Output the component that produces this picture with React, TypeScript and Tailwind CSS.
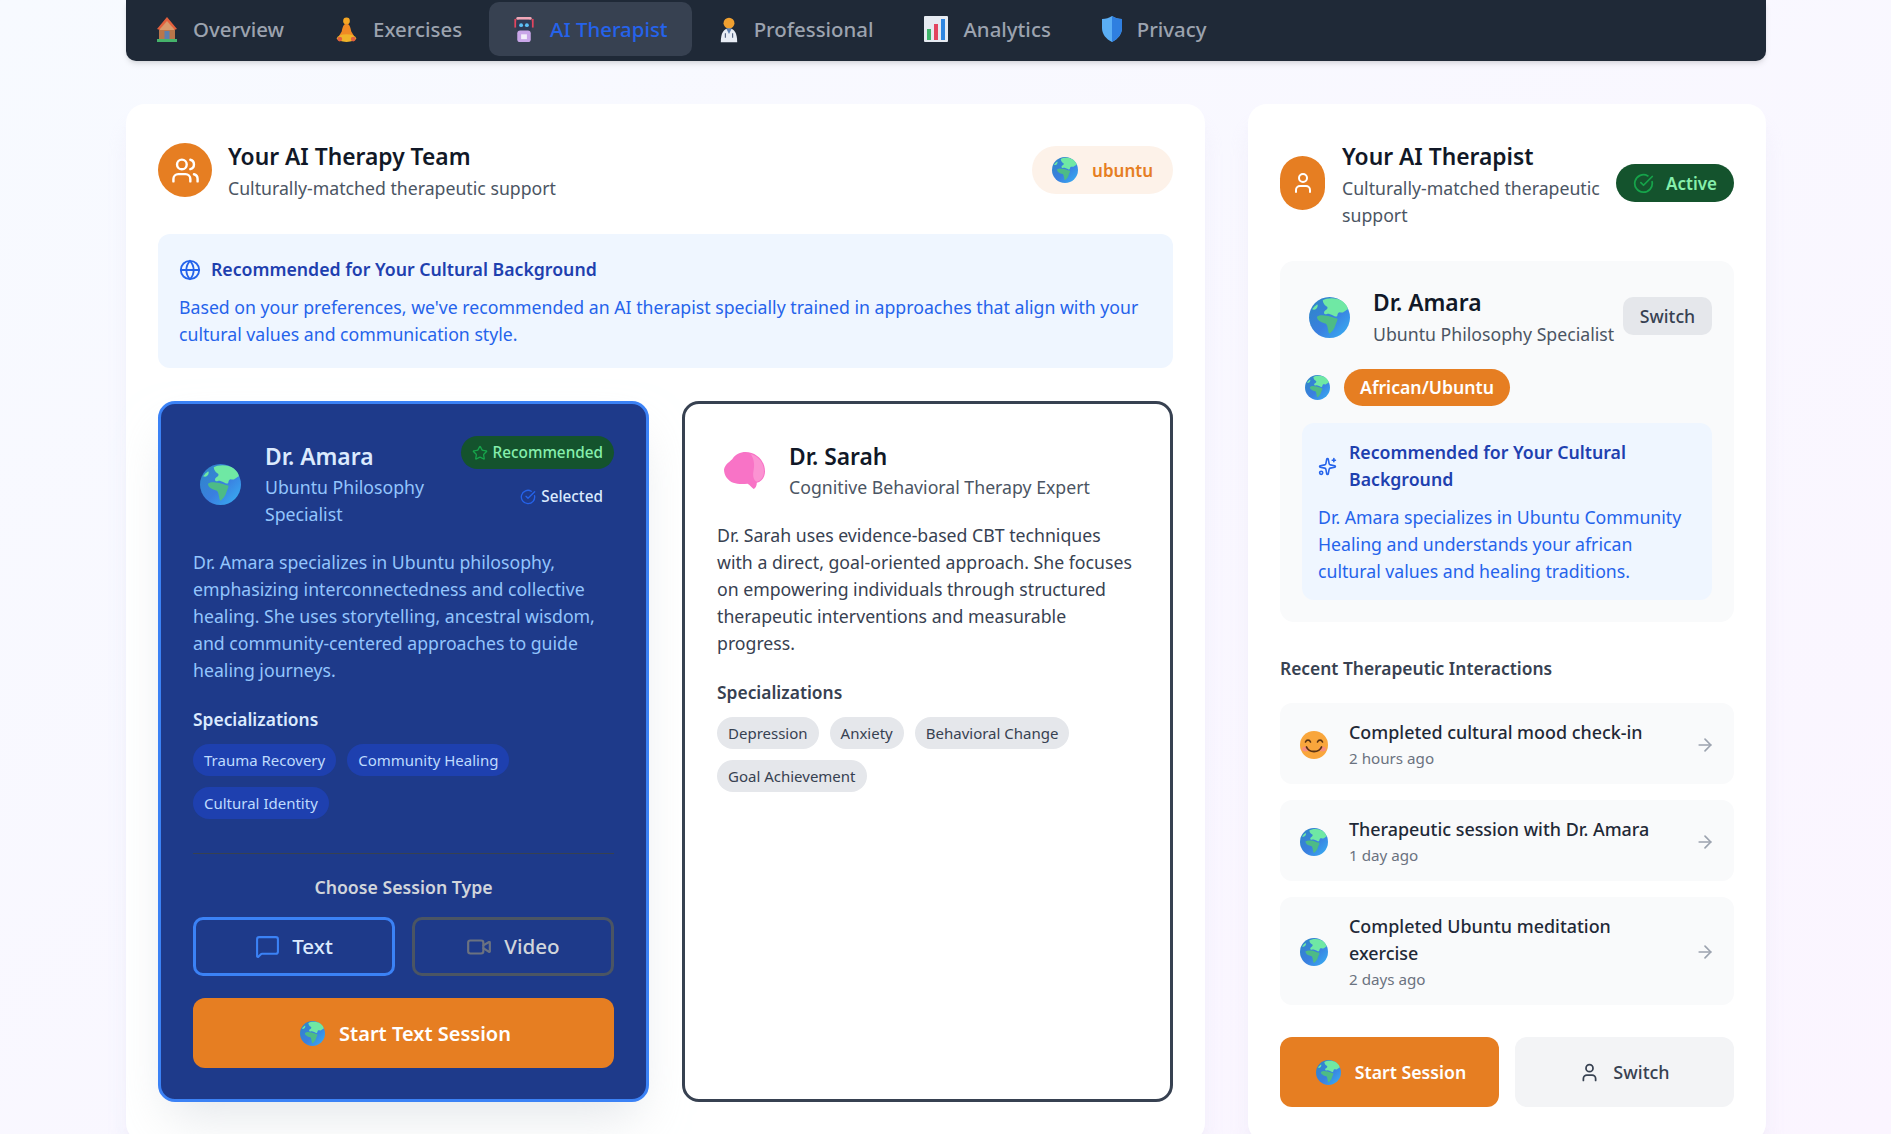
import { useId } from "react"
import {
  ArrowRight,
  CircleCheckBig,
  Globe,
  MessageSquare,
  Sparkles,
  Star,
  User,
  Users,
  Video,
} from "lucide-react"

// emoji stand-ins, no emoji font in the sandbox
function EarthIcon({ className }: { className: string }) {
  const id = useId()
  return (
    <svg viewBox="0 0 40 40" className={className}>
      <defs>
        <linearGradient id={id} x1="0.1" y1="0.1" x2="0.9" y2="0.9">
          <stop offset="0" stopColor="#2f86c9" />
          <stop offset="0.55" stopColor="#3a7fe0" />
          <stop offset="1" stopColor="#38a8f0" />
        </linearGradient>
      </defs>
      <circle cx="20" cy="20" r="20" fill={`url(#${id})`} />
      <path
        d="M13 3.5C18 .5 27 .3 33 4.5c3 2.5 4.6 5 5 7.500-2 1-3.500 2.500-5 3-2 .5-3-1-4.500.5-1 1.500-.5 2.800-1.500 3.500-1.500.5-3-1-4.500-1.500-2-.5-3-1.500-5-1-2.500 1-3.500-.5-2.500-2.500 1-1.500 2.500-1.500 3-3 .5-2-1.500-2-2.500-3-1-1.500-2-2.500-2-4.500z"
        fill="#6fe8a4"
      />
      <path
        d="M8 19c2-1.500 4.500-1.500 7-1 2.500 0 5 .5 7.500 1.500 2 1 3.500 1 5 1.500 1 1-.5 3-1 4.500-1 2-1 4-2.500 6-1 1.500-2.500 3-3.500 4-1.500.5-1.500-2-2-4-.5-2.500-.5-4-2-5.500-3-.5-5.500-1.500-7.500-3.500-1-1.500-1.500-2.500-1-3.500z"
        fill="#4dbb86"
      />
      <path d="M3 12c1.500-2 3-3.500 5-5 1 1 .5 3-1 4.500-1 1-2.500 1-4 .5z" fill="#6fe8a4" />
    </svg>
  )
}

function BrainIcon({ className }: { className: string }) {
  return (
    <svg viewBox="0 0 40 37" className={className}>
      <path
        d="M0 17C1 12 5 10 8 7 11 2 16 0 21 0 31 0 40 8 40 19 40 24 37 29 32 30 32 33 31 35 29 36 27 35 25 32 23 31 18 31.500 13 31.500 9 30 4 28 0 23 0 17z"
        fill="#f873c6"
      />
      <path
        d="M26 2C33 4 39 10 39 19 39 24 36 28 32 29 28 27 28 22 29 17 30 12 29 6 26 2z"
        fill="#fb93d2"
      />
    </svg>
  )
}

function SmileIcon({ className }: { className: string }) {
  return (
    <svg viewBox="0 0 28 28" className={className}>
      <circle cx="14" cy="14" r="14" fill="#f9a63c" />
      <ellipse cx="5.500" cy="18" rx="3.500" ry="2.500" fill="#f78d7a" />
      <ellipse cx="22.500" cy="18" rx="3.500" ry="2.500" fill="#f78d7a" />
      <path d="M5.500 11c1-2.500 4-2.500 5 0M17.500 11c1-2.500 4-2.500 5 0" stroke="#5b3412" strokeWidth="1.600" fill="none" strokeLinecap="round" />
      <path d="M6.500 16c2.500 6 12.500 6 15 0" stroke="#5b3412" strokeWidth="1.800" fill="none" strokeLinecap="round" />
    </svg>
  )
}

function HouseIcon() {
  return (
    <svg viewBox="0 0 22 26" className="w-[22px] h-[26px]">
      <rect x="3" y="11" width="16" height="13" fill="#b9764a" />
      <path d="M11 1 L21 13 L18 14 L11 6 L4 14 L1 13 Z" fill="#e2603d" />
      <path d="M11 5 L18 13 V14 H4 V13 Z" fill="#d99a6c" />
      <rect x="8.500" y="15" width="5" height="9" fill="#5b7fb0" />
      <rect x="1" y="23" width="20" height="3" fill="#45b36b" />
    </svg>
  )
}

function MeditateIcon() {
  return (
    <svg viewBox="0 0 24 28" className="w-[23px] h-[27px]">
      <circle cx="12" cy="5" r="3.500" fill="#f5a623" />
      <path d="M12 8c3 0 4 3 5 8l3 5c-2 2-14 2-16 0l3-5c1-5 2-8 5-8z" fill="#f08a24" />
      <ellipse cx="12" cy="23" rx="10" ry="4" fill="#f0b429" />
      <circle cx="5" cy="24" r="2.500" fill="#e2603d" />
      <circle cx="19" cy="24" r="2.500" fill="#e2603d" />
    </svg>
  )
}

function RobotIcon() {
  return (
    <svg viewBox="0 0 22 28" className="w-[22px] h-[27px]">
      <rect x="3" y="1" width="16" height="3" rx="1.500" fill="#f2a7b8" />
      <rect x="1" y="3" width="2" height="9" fill="#e2455f" />
      <rect x="19" y="3" width="2" height="9" fill="#e2455f" />
      <rect x="3" y="4" width="16" height="11" rx="3" fill="#2d3a55" />
      <circle cx="8" cy="9.500" r="2" fill="#5cc0f5" />
      <circle cx="14" cy="9.500" r="2" fill="#5cc0f5" />
      <rect x="4" y="15" width="14" height="12" rx="3" fill="#c9a6e8" />
      <rect x="8" y="19" width="6" height="5" fill="#f3eefa" />
    </svg>
  )
}

function DoctorIcon() {
  return (
    <svg viewBox="0 0 22 28" className="w-[20px] h-[27px]">
      <circle cx="11" cy="7" r="6" fill="#f0a030" />
      <path d="M2 28c0-10 3-15 9-15s9 5 9 15z" fill="#e8edf5" />
      <path d="M8 13l3 6 3-6z" fill="#5b7fb0" />
      <path d="M7 18v5M15 18v5" stroke="#4a5a78" strokeWidth="1.200" />
    </svg>
  )
}

function ChartIcon() {
  return (
    <svg viewBox="0 0 24 26" className="w-[24px] h-[26px]">
      <rect x="0" y="0" width="24" height="26" rx="1" fill="#e6ebf2" />
      <rect x="3" y="13" width="4" height="11" fill="#3fb56b" />
      <rect x="10" y="8" width="4" height="16" fill="#e2455f" />
      <rect x="17" y="3" width="4" height="21" fill="#2f86e0" />
    </svg>
  )
}

function ShieldIcon() {
  return (
    <svg viewBox="0 0 20 26" className="w-[20px] h-[26px]">
      <path d="M10 0c3 2 6 3 10 3v9c0 6-4 11-10 14C4 23 0 18 0 12V3c4 0 7-1 10-3z" fill="#5aaef5" />
      <path d="M10 0c3 2 6 3 10 3v9c0 6-4 11-10 14z" fill="#2f7fe0" />
    </svg>
  )
}

const tabs = [
  { label: "Overview", icon: <HouseIcon /> },
  { label: "Exercises", icon: <MeditateIcon /> },
  { label: "AI Therapist", icon: <RobotIcon />, active: true },
  { label: "Professional", icon: <DoctorIcon /> },
  { label: "Analytics", icon: <ChartIcon /> },
  { label: "Privacy", icon: <ShieldIcon /> },
]

function Tag({ label, selected }: { label: string; selected?: boolean }) {
  return (
    <span
      className={
        selected
          ? "h-[32px] px-[11px] flex items-center rounded-full bg-[#1e40af] text-[#bfdbfe] text-[15px]"
          : "h-[32px] px-[11px] flex items-center rounded-full bg-[#e5e7eb] text-[#374151] text-[15px]"
      }
    >
      {label}
    </span>
  )
}

function Interaction({ icon, title, time }: { icon: React.ReactNode; title: string; time: string }) {
  return (
    <div className="flex items-center rounded-[12px] bg-[#f9fafb] pl-[20px] pr-[19px] pt-[16px] pb-[14px]">
      <div className="w-[28px] shrink-0">{icon}</div>
      <div className="flex-1 pl-[21px] pr-[20px]">
        <div className="text-[17.9px] leading-[27px] font-medium text-[#1f2937]">{title}</div>
        <div className="text-[15.2px] leading-[24px] text-[#6b7280]">{time}</div>
      </div>
      <ArrowRight className="size-[20px] text-[#9ca3af] shrink-0" />
    </div>
  )
}

export default function App() {
  return (
    <div
      className="h-[1134px] overflow-hidden bg-gradient-to-br from-[#f7faff] to-[#fbf5ff] pl-[126px] pr-[125px] text-[17.7px] leading-[27px]"
      style={{ fontFamily: '"Noto Sans", sans-serif' }}
    >
      <nav className="h-[61px] flex items-start gap-[3px] pl-[6px] pt-[2px] rounded-b-[10px] bg-[#1f2937] shadow-md">
        {tabs.map((t) => (
          <div
            key={t.label}
            className={
              t.active
                ? "h-[54px] flex items-center gap-[15px] px-[24px] rounded-[10px] bg-[#374151] text-[20.4px] font-medium text-[#2563eb]"
                : "h-[54px] flex items-center gap-[15px] px-[24px] rounded-[10px] text-[20.4px] font-medium text-[#9ca3af]"
            }
          >
            {t.icon}
            <span>{t.label}</span>
          </div>
        ))}
      </nav>

      <div className="grid grid-cols-3 gap-[43px] mt-[43px]">
        {/* Team */}
        <section className="col-span-2 rounded-[19px] bg-white px-[32px] pt-[36px] pb-[40px] shadow-xl shadow-[#e9e6f5]/60">
          <div className="flex items-center justify-between">
            <div className="flex items-center gap-[16px]">
              <div className="size-[54px] mb-[2px] rounded-full bg-[#e67e22] flex items-center justify-center">
                <Users className="size-[29px] text-white" />
              </div>
              <div>
                <h2 className="text-[22.8px] leading-[34px] font-semibold text-[#111827]">Your AI Therapy Team</h2>
                <p className="mt-[1px] text-[#4b5563]">Culturally-matched therapeutic support</p>
              </div>
            </div>
            <div className="h-[48px] mb-[2px] flex items-center gap-[14px] px-[20px] rounded-full bg-[#fdf2e9] text-[17px] font-semibold text-[#e67e22]">
              <EarthIcon className="size-[26px]" />
              ubuntu
            </div>
          </div>

          <div className="mt-[32px] rounded-[12px] bg-[#eff6ff] px-[21px] pt-[22px] pb-[20px]">
            <div className="flex items-center gap-[10px] font-semibold text-[#1e40af]">
              <Globe className="size-[22px] text-[#2563eb]" />
              Recommended for Your Cultural Background
            </div>
            <p className="mt-[11px] text-[#2563eb]">
              Based on your preferences, we've recommended an AI therapist specially trained in approaches that align
              with your cultural values and communication style.
            </p>
          </div>

          <div className="grid grid-cols-2 gap-[33px] mt-[33px]">
            {/* Dr. Amara */}
            <article className="rounded-[17px] border-3 border-[#3b82f6] bg-[#1e3a8a] px-[32px] pt-[32px] pb-[31px] shadow-2xl shadow-gray-300/60">
              <div className="flex items-start justify-between">
                <div className="flex items-center gap-[18px] pt-[4px]">
                  <div className="w-[54px] shrink-0 flex justify-center">
                    <EarthIcon className="size-[41px]" />
                  </div>
                  <div>
                    <h3 className="text-[22.8px] leading-[34px] font-semibold text-[#dbeafe]">Dr. Amara</h3>
                    <p className="text-[#93c5fd] w-[175px]">Ubuntu Philosophy Specialist</p>
                  </div>
                </div>
                <div className="flex flex-col items-end shrink-0">
                  <div className="h-[33px] flex items-center gap-[5px] px-[11px] rounded-full bg-[#14532d] text-[15.3px] font-medium text-[#86efac]">
                    <Star className="size-[16px] text-[#16a34a]" />
                    Recommended
                  </div>
                  <div className="mt-[14px] mr-[11px] flex items-center gap-[5px] text-[15.3px] font-medium text-[#dbeafe]">
                    <CircleCheckBig className="size-[16px] text-[#2563eb]" />
                    Selected
                  </div>
                </div>
              </div>
              <p className="mt-[21px] text-[#93c5fd]">
                Dr. Amara specializes in Ubuntu philosophy, emphasizing interconnectedness and collective healing. She
                uses storytelling, ancestral wisdom, and community-centered approaches to guide healing journeys.
              </p>
              <h4 className="mt-[22px] font-semibold text-[17.4px] text-[#dbeafe]">Specializations</h4>
              <div className="mt-[11px] flex flex-wrap gap-x-[11px] gap-y-[11px]">
                <Tag selected label="Trauma Recovery" />
                <Tag selected label="Community Healing" />
                <Tag selected label="Cultural Identity" />
              </div>
              <div className="mt-[34px] border-t border-[#374151] pt-[20px]">
                <div className="text-center font-semibold text-[#d1d5db]">Choose Session Type</div>
                <div className="mt-[16px] grid grid-cols-2 gap-[17px]">
                  <button className="h-[59px] flex items-center justify-center gap-[12px] rounded-[10px] border-3 border-[#3b82f6] text-[20.6px] font-medium text-[#dbeafe]">
                    <MessageSquare className="size-[25px] text-[#3b82f6]" />
                    Text
                  </button>
                  <button className="h-[59px] flex items-center justify-center gap-[12px] rounded-[10px] border-3 border-[#4b5563] text-[20.6px] font-medium text-[#d1d5db]">
                    <Video className="size-[26px] text-[#6b7280]" />
                    Video
                  </button>
                </div>
                <button className="mt-[22px] w-full h-[70px] pl-[4px] flex items-center justify-center gap-[14px] rounded-[12px] bg-[#e67e22] text-[20px] font-semibold text-white">
                  <EarthIcon className="size-[25px]" />
                  Start Text Session
                </button>
              </div>
            </article>

            {/* Dr. Sarah */}
            <article className="rounded-[17px] border-3 border-[#374151] bg-white px-[32px] pt-[32px] pb-[30px]">
              <div className="flex items-center gap-[18px] pt-[4px]">
                <div className="w-[54px] shrink-0 flex justify-center">
                  <BrainIcon className="w-[41px] h-[38px]" />
                </div>
                <div>
                  <h3 className="text-[22.8px] leading-[34px] font-semibold text-[#111827]">Dr. Sarah</h3>
                  <p className="text-[#4b5563]">Cognitive Behavioral Therapy Expert</p>
                </div>
              </div>
              <p className="mt-[21px] text-[#374151]">
                Dr. Sarah uses evidence-based CBT techniques with a direct, goal-oriented approach. She focuses on
                empowering individuals through structured therapeutic interventions and measurable progress.
              </p>
              <h4 className="mt-[22px] font-semibold text-[17.4px] text-[#374151]">Specializations</h4>
              <div className="mt-[11px] flex flex-wrap gap-x-[11px] gap-y-[11px]">
                <Tag label="Depression" />
                <Tag label="Anxiety" />
                <Tag label="Behavioral Change" />
                <Tag label="Goal Achievement" />
              </div>
            </article>
          </div>
        </section>

        {/* Current therapist */}
        <aside className="rounded-[19px] bg-white px-[32px] pt-[36px] pb-[32px] shadow-xl shadow-[#e9e6f5]/60">
          <div className="flex items-center gap-[12px]">
            <div className="w-[45px] h-[54px] mb-[3px] shrink-0 rounded-full bg-[#e67e22] flex items-center justify-center">
              <User className="size-[24px] text-white" />
            </div>
            <div className="flex-1 pl-[5px]">
              <h2 className="text-[22.8px] leading-[34px] font-semibold text-[#111827]">Your AI Therapist</h2>
              <p className="mt-[1px] text-[#4b5563]">Culturally-matched therapeutic support</p>
            </div>
            <div className="h-[38px] mb-[3px] shrink-0 flex items-center gap-[12px] px-[17px] rounded-full bg-[#14532d] text-[17px] font-semibold text-[#86efac]">
              <CircleCheckBig className="size-[21px] text-[#16a34a]" />
              Active
            </div>
          </div>

          <div className="mt-[32px] rounded-[14px] bg-[#f9fafb] px-[22px] pt-[25px] pb-[22px]">
            <div className="flex items-center">
              <div className="w-[54px] shrink-0 flex justify-center">
                <EarthIcon className="size-[41px]" />
              </div>
              <div className="flex-1 min-w-0 pl-[17px]">
                <h3 className="text-[22.8px] leading-[34px] font-semibold text-[#111827]">Dr. Amara</h3>
                <p className="mt-[1px] text-[#4b5563] whitespace-nowrap">Ubuntu Philosophy Specialist</p>
              </div>
              <button className="h-[38px] w-[89px] shrink-0 mb-[2px] rounded-[10px] bg-[#e5e7eb] font-medium text-[#374151]">
                Switch
              </button>
            </div>
            <div className="mt-[21px] flex items-center gap-[14px]">
              <EarthIcon className="size-[25px] ml-[3px]" />
              <span className="h-[37px] flex items-center px-[16px] rounded-full bg-[#e67e22] text-[17.7px] font-semibold text-white">
                African/Ubuntu
              </span>
            </div>
            <div className="mt-[17px] rounded-[12px] bg-[#eff6ff] px-[16px] py-[16px]">
              <div className="flex items-center gap-[12px] font-semibold text-[#1e40af]">
                <Sparkles className="size-[19px] text-[#2563eb] shrink-0" />
                Recommended for Your Cultural Background
              </div>
              <p className="mt-[11px] -mb-[1px] text-[#2563eb]">
                Dr. Amara specializes in Ubuntu Community Healing and understands your african cultural values and
                healing traditions.
              </p>
            </div>
          </div>

          <h4 className="mt-[33px] font-semibold text-[17.4px] text-[#374151]">Recent Therapeutic Interactions</h4>
          <div className="mt-[21px] flex flex-col gap-[16px]">
            <Interaction icon={<SmileIcon className="size-[28px]" />} title="Completed cultural mood check-in" time="2 hours ago" />
            <Interaction icon={<EarthIcon className="size-[28px]" />} title="Therapeutic session with Dr. Amara" time="1 day ago" />
            <Interaction icon={<EarthIcon className="size-[28px]" />} title="Completed Ubuntu meditation exercise" time="2 days ago" />
          </div>

          <div className="mt-[32px] grid grid-cols-2 gap-[16px]">
            <button className="h-[70px] pl-[3px] flex items-center justify-center gap-[14px] rounded-[12px] bg-[#e67e22] font-semibold text-white">
              <EarthIcon className="size-[25px]" />
              Start Session
            </button>
            <button className="h-[70px] flex items-center justify-center gap-[13px] rounded-[12px] bg-[#f3f4f6] text-[18px] font-medium text-[#374151]">
              <User className="size-[21px]" />
              Switch
            </button>
          </div>
        </aside>
      </div>
    </div>
  )
}
